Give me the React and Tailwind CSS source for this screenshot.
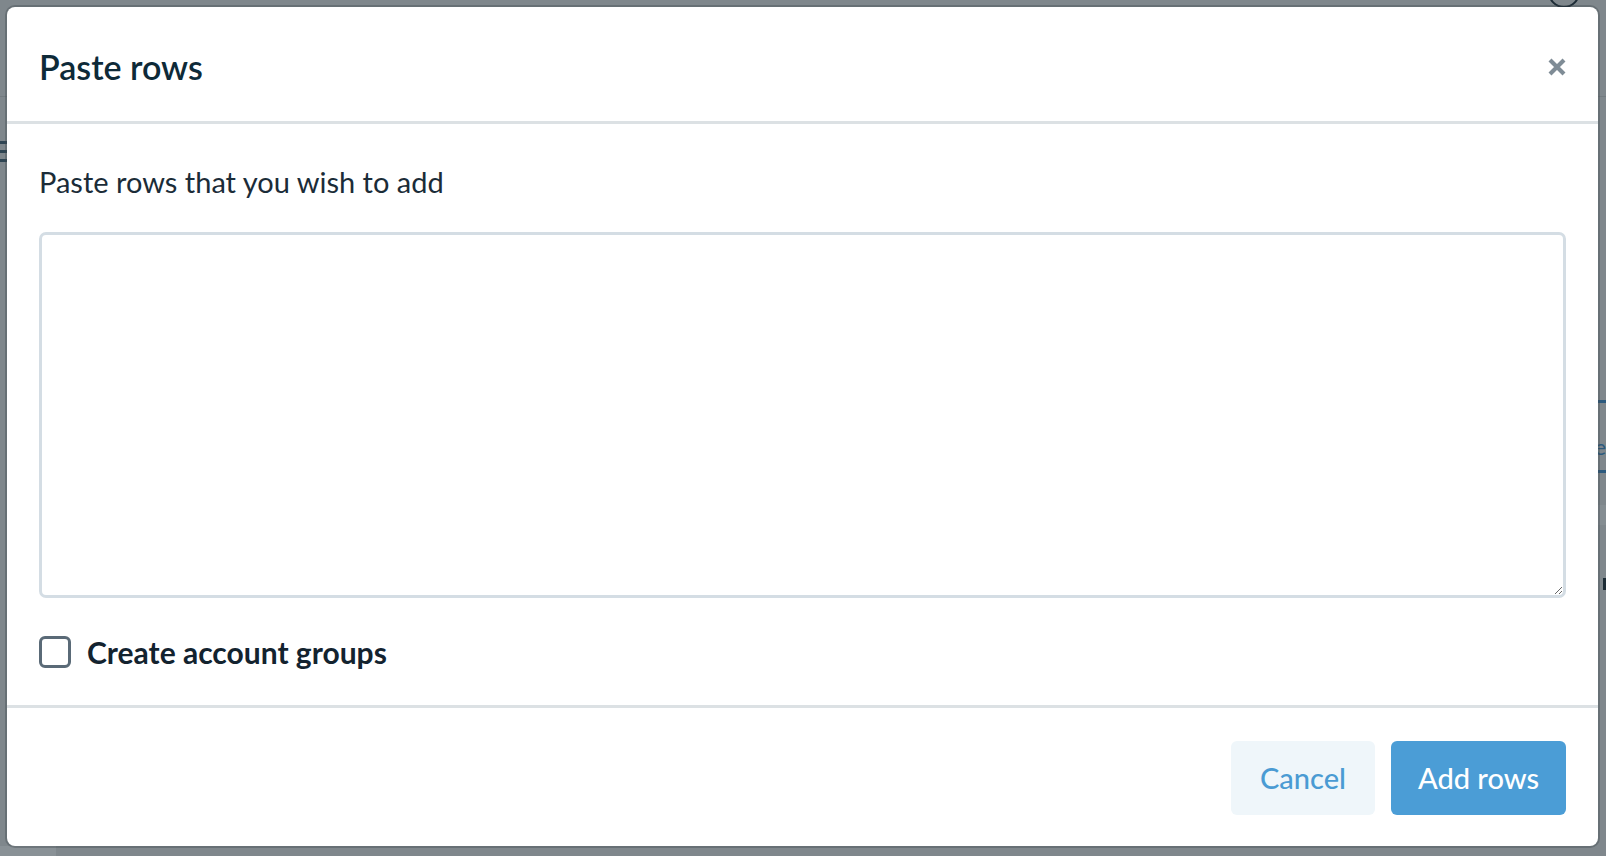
import { useState } from "react";

function CloseIcon() {
  return (
    <svg width="18" height="18" viewBox="0 0 18 18" aria-hidden="true">
      <path d="M2 2 L16 16 M16 2 L2 16" stroke="#7f8c96" strokeWidth="4.2" strokeLinecap="butt" fill="none" />
    </svg>
  );
}

export default function App() {
  const [rows, setRows] = useState("");
  const [groups, setGroups] = useState(false);

  return (
    <div className="relative h-[856px] w-full overflow-hidden bg-[#7f878c] font-['Lato','Liberation_Sans',sans-serif]">
      {/* page behind the overlay */}
      <div className="absolute left-0 right-0 top-[96px] h-px bg-[#737b80]" />
      <div className="absolute left-0 top-[141px] flex flex-col gap-[6px]">
        <span className="block h-[3px] w-[7px] bg-[#2f4553]" />
        <span className="block h-[3px] w-[7px] bg-[#2f4553]" />
        <span className="block h-[3px] w-[7px] bg-[#2f4553]" />
      </div>
      <div className="absolute right-[26px] top-[-24px] h-[32px] w-[32px] rounded-full border-2 border-[#1d2c36]" />
      <div className="absolute right-0 top-[400px] h-[3px] w-[8px] bg-[#2c5a7e]" />
      <div className="absolute right-0 top-[436px] text-[22px] leading-none text-[#2c5a7e]">e</div>
      <div className="absolute right-0 top-[470px] h-[3px] w-[8px] bg-[#2c5a7e]" />
      <div className="absolute right-0 top-[505px] h-[20px] w-[8px] bg-[#858d92]" />
      <div className="absolute right-0 top-[578px] h-[12px] w-[3px] bg-[#1d2c36]" />
      <div className="absolute bottom-0 left-0 h-[10px] w-[56px] bg-[#899196]" />

      {/* overlay */}
      <div className="absolute inset-0 flex pb-[10px] pl-[7px] pr-[8px] pt-[7px]">
        <div className="flex flex-1 flex-col rounded-[8px] bg-white shadow-[0_0_0_2px_rgba(60,68,74,0.35)]">
          <header className="flex h-[117px] shrink-0 items-center justify-between border-b-[3px] border-[#dce1e4] px-[32px] pt-[6px]">
            <h2 className="text-[34px] font-semibold leading-none text-[#0e2a38]">Paste rows</h2>
            <button className="flex h-[18px] w-[18px] items-center justify-center">
              <CloseIcon />
            </button>
          </header>

          <div className="flex flex-1 flex-col px-[32px] pb-[34px] pt-[40px]">
            <label className="block h-[36px] text-[29px] leading-[36px] text-[#1b2c38]">
              Paste rows that you wish to add
            </label>
            <textarea
              value={rows}
              onChange={(e) => setRows(e.target.value)}
              className="mt-[32px] h-[366px] w-full rounded-[7px] border-[3px] border-[#d4dde4] bg-white p-3 text-[28px] text-[#1b2c38] outline-none"
            />
            <label className="mt-[38px] flex h-[32px] items-center gap-[16px]">
              <input
                type="checkbox"
                checked={groups}
                onChange={(e) => setGroups(e.target.checked)}
                className="h-[32px] w-[32px] shrink-0 appearance-none rounded-[6px] border-[3px] border-[#5a6a77] bg-white"
              />
              <span className="text-[30px] font-bold leading-none text-[#13232f]">Create account groups</span>
            </label>
          </div>

          <footer className="flex h-[141px] shrink-0 items-center justify-end gap-[16px] border-t-[3px] border-[#dce1e4] px-[32px] pt-[2px]">
            <button className="h-[74px] w-[144px] rounded-[6px] bg-[#eff6fa] text-[29px] font-medium text-[#4a9bd3]">
              Cancel
            </button>
            <button className="h-[74px] w-[175px] rounded-[6px] bg-[#4b9dd6] text-[29px] font-medium text-white">
              Add rows
            </button>
          </footer>
        </div>
      </div>
    </div>
  );
}
